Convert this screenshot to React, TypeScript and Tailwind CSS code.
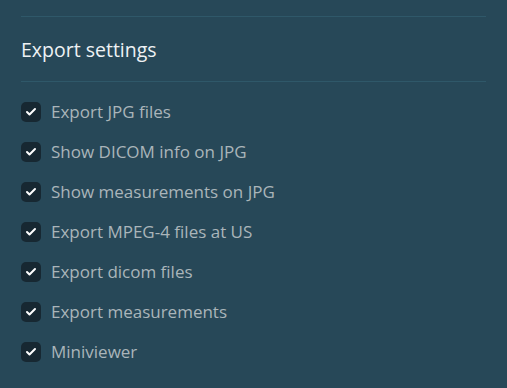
import { Check } from 'lucide-react';

const items = [
  'Export JPG files',
  'Show DICOM info on JPG',
  'Show measurements on JPG',
  'Export MPEG-4 files at US',
  'Export dicom files',
  'Export measurements',
  'Miniviewer',
];

export default function App() {
  return (
    <div className="w-[507px] h-[388px] overflow-hidden bg-[#274858] px-[21px] pt-[16px] font-['Open_Sans',sans-serif]">
      <div className="border-t border-[#2f5869] w-[465px]" />
      <h2 className="text-[19.5px] leading-[28px] text-[#eef2f4] pt-[19px] pb-[17px]">Export settings</h2>
      <div className="border-t border-[#2f5869] w-[465px]" />
      <ul className="flex flex-col gap-[20px] pt-[20px]">
        {items.map((label) => (
          <li key={label} className="flex items-center gap-[10px] h-[20px]">
            <span className="w-[20px] h-[20px] rounded-[5px] bg-[#172832] flex items-center justify-center">
              <Check size={12} strokeWidth={4} className="text-white" />
            </span>
            <span className="text-[17px] leading-[20px] text-[#aab5ba]">{label}</span>
          </li>
        ))}
      </ul>
    </div>
  );
}
